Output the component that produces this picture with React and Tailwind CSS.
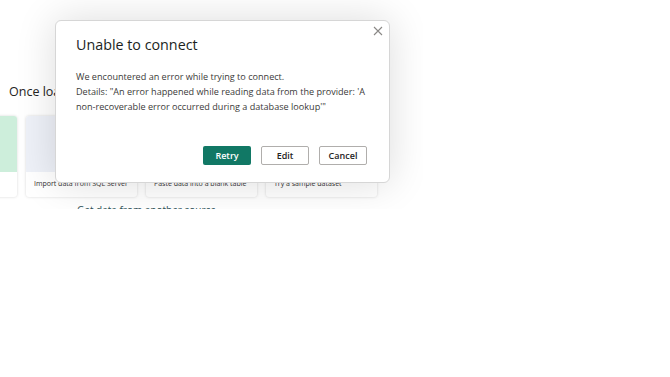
import React from 'react';

const cards = [
  { label: 'Import data from SQL Server', tone: 'bg-[#eef1f8]' },
  { label: 'Paste data into a blank table', tone: 'bg-[#eef1f8]' },
  { label: 'Try a sample dataset', tone: 'bg-[#eef1f8]' },
];

function Dialog() {
  return (
    <div className="absolute left-[55px] top-[20px] w-[335px] h-[163px] bg-white rounded-[6px] border border-[#d6d6d6] shadow-[0_0_40px_rgba(0,0,0,0.14)]">
      <button className="absolute right-[5px] top-[4px] w-[12px] h-[12px] flex items-center justify-center text-[#8a8886]">
        <svg width="10" height="10" viewBox="0 0 10 10" fill="none" stroke="currentColor" strokeWidth="1.1">
          <path d="M1 1l8 8M9 1l-8 8" />
        </svg>
      </button>
      <div className="pl-[20px] pr-[20px] pt-[14px]">
        <h2 className="text-[14.3px] leading-[20px] text-[#201f1e]">Unable to connect</h2>
        <div className="mt-[14px] text-[9.1px] leading-[15px] text-[#3b3a39]">
          <p>We encountered an error while trying to connect.</p>
          <p>
            Details: "An error happened while reading data from the provider: 'A
            non-recoverable error occurred during a database lookup'"
          </p>
        </div>
      </div>
      <div className="flex justify-end gap-[10px] pr-[22px] mt-[32px]">
        <button className="w-[48px] h-[19px] rounded-[2px] bg-[#117865] text-white text-[9px] font-semibold">
          Retry
        </button>
        <button className="w-[48px] h-[19px] rounded-[2px] border border-[#b0aeac] bg-white text-[#252423] text-[9px] font-semibold">
          Edit
        </button>
        <button className="w-[48px] h-[19px] rounded-[2px] border border-[#b0aeac] bg-white text-[#252423] text-[9px] font-semibold">
          Cancel
        </button>
      </div>
    </div>
  );
}

export default function App() {
  return (
    <div className="w-[670px] h-[377px] bg-white" style={{ fontFamily: '"Open Sans", "Noto Sans", sans-serif' }}>
      <div className="relative w-[423px] h-[209px] overflow-hidden bg-white">
        <div className="pt-[83px]">
          <p className="pl-[9px] text-[12.5px] leading-[18px] text-[#252423]">Once loaded, your data will appear here</p>
          <div className="flex gap-[9px] mt-[15px] -ml-[94px]">
            <div className="w-[111px] h-[81px] bg-white rounded-[3px] shadow-[0_0_3px_rgba(0,0,0,0.16)] overflow-hidden flex flex-col">
              <div className="h-[56px] bg-[#cdeedb]" />
            </div>
            {cards.map((c) => (
              <div
                key={c.label}
                className="w-[111px] h-[81px] bg-white rounded-[3px] shadow-[0_0_3px_rgba(0,0,0,0.16)] overflow-hidden flex flex-col"
              >
                <div className={`h-[56px] ${c.tone}`} />
                <div className="flex-1 flex items-center pl-[8px] text-[7px] text-[#323130]">{c.label}</div>
              </div>
            ))}
          </div>
          <p className="pl-[77px] mt-[6px] text-[10px] leading-[14px] text-[#2b4f55]">Get data from another source</p>
        </div>
        <Dialog />
      </div>
    </div>
  );
}
